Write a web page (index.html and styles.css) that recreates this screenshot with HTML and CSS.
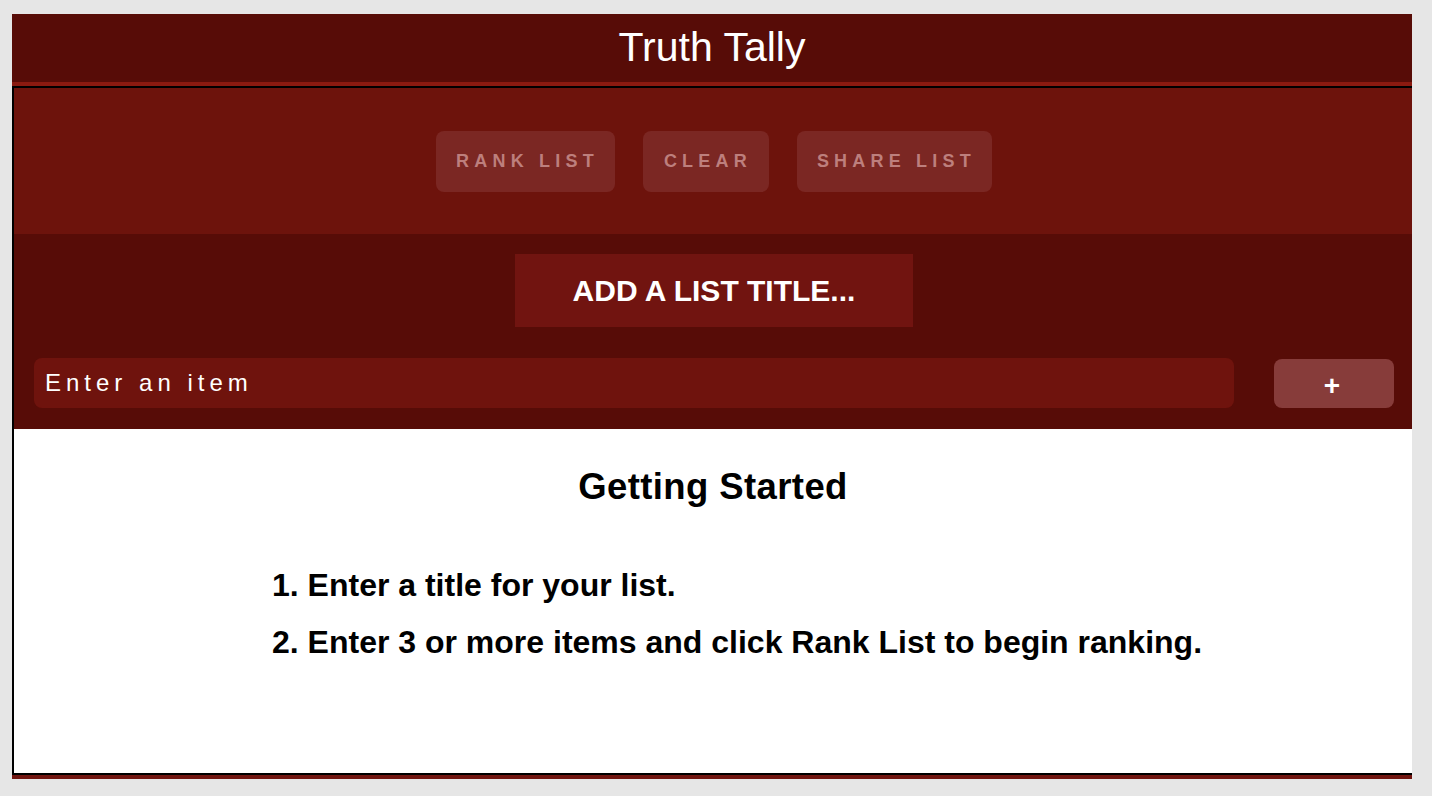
FILE: index.html
```html
<!DOCTYPE html>
<html lang="en">
<head>
<meta charset="utf-8">
<title>Truth Tally</title>
<link rel="stylesheet" href="styles.css">
</head>
<body>
<div class="app">
  <header class="app-header">
    <h1 class="app-title">Truth Tally</h1>
  </header>
  <div class="frame">
    <main class="main">
      <section class="toolbar">
        <button class="tool-btn tool-rank">RANK LIST</button>
        <button class="tool-btn tool-clear">CLEAR</button>
        <button class="tool-btn tool-share">SHARE LIST</button>
      </section>
      <section class="editor">
        <div class="list-title">ADD A LIST TITLE...</div>
        <div class="item-row">
          <div class="item-input">Enter an item</div>
          <button class="add-btn">+</button>
        </div>
      </section>
      <section class="content">
        <h2 class="content-heading">Getting Started</h2>
        <ol class="steps">
          <li>Enter a title for your list.</li>
          <li>Enter 3 or more items and click Rank List to begin ranking.</li>
        </ol>
      </section>
    </main>
  </div>
</div>
</body>
</html>
```

FILE: styles.css
```css
* { box-sizing: border-box; }

html, body {
  margin: 0;
  padding: 0;
}

body {
  background: #e6e6e6;
  font-family: "Liberation Sans", Arial, Helvetica, sans-serif;
  padding: 14px 20px 17px 12px;
}

.app {
  width: 1400px;
}

.app-header {
  height: 72px;
  background: #570c07;
  border-bottom: 4px solid #8a1a10;
  display: flex;
  justify-content: center;
}

.app-title {
  margin: 0;
  padding-top: 10px;
  font-size: 41px;
  font-weight: 400;
  color: #ffffff;
  line-height: 47px;
}

.frame {
  border-bottom: 4px solid #711510;
}

.main {
  border: 2px solid #000;
  border-right: none;
  height: 689px;
  display: flex;
  flex-direction: column;
  background: #fff;
}

.toolbar {
  height: 146px;
  background: #6d130c;
  display: flex;
  justify-content: center;
  align-items: center;
  gap: 28px;
  padding-left: 2px;
}

.tool-btn {
  height: 61px;
  padding: 0 16px 0 20px;
  border: none;
  border-radius: 8px;
  background: #7b2723;
  color: #bd7f7d;
  font-family: "Liberation Sans", Arial, Helvetica, sans-serif;
  font-weight: 700;
  font-size: 18px;
  letter-spacing: 5.2px;
}

.tool-clear {
  padding: 0 17px 0 21px;
}

.editor {
  height: 195px;
  background: #570c07;
  padding-top: 20px;
  display: flex;
  flex-direction: column;
  align-items: center;
}

.list-title {
  width: 398px;
  height: 73px;
  background: #711410;
  color: #fff;
  font-weight: 700;
  font-size: 30px;
  display: flex;
  align-items: center;
  justify-content: center;
  margin-left: 2px;
  padding-top: 1px;
}

.item-row {
  align-self: stretch;
  margin-top: 31px;
  padding: 0 18px 0 20px;
  display: flex;
  gap: 40px;
}

.item-input {
  flex: 1;
  height: 50px;
  border-radius: 8px;
  background: #6f130d;
  color: #fff;
  font-size: 24px;
  letter-spacing: 5px;
  padding-left: 11px;
  display: flex;
  align-items: center;
}

.add-btn {
  width: 120px;
  height: 49px;
  margin-top: 1px;
  border: none;
  border-radius: 8px;
  background: #873c3a;
  color: #fff;
  font-family: "Liberation Sans", Arial, Helvetica, sans-serif;
  font-weight: 700;
  font-size: 28px;
  line-height: 1;
  padding: 4px 4px 0 0;
}

.content {
  flex: 1;
  background: #fff;
  padding-top: 37px;
  color: #000;
}

.content-heading {
  margin: 0;
  text-align: center;
  font-size: 36.5px;
  font-weight: 700;
  letter-spacing: 0.4px;
  line-height: 41px;
}

.steps {
  margin: 60px 0 0 258px;
  padding: 0;
  list-style-position: inside;
  font-size: 32px;
  font-weight: 700;
}

.steps li {
  line-height: 36px;
  margin-bottom: 21px;
}
```
